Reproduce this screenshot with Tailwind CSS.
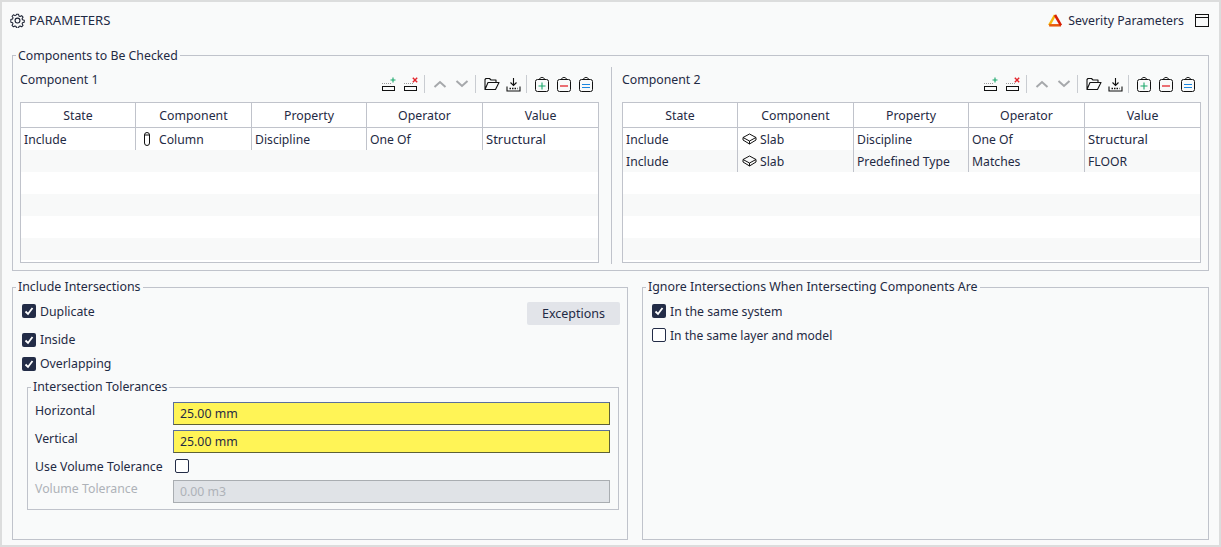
<!DOCTYPE html>
<html><head><meta charset="utf-8">
<script src="https://cdn.jsdelivr.net/npm/@tailwindcss/browser@4"></script>
</head>
<body class="m-0 bg-[#dcdddd]">
<div class="w-[1221px] h-[547px] overflow-hidden pt-[2px] px-[2px] pb-[2px] font-['Noto_Sans',sans-serif] text-[12.3px] leading-[16px] text-[#1f2a44]">
<main class="h-[543px] bg-[#f9fafa] px-[10px] flex flex-col">
  <header class="h-[45px] shrink-0 flex items-center justify-between pb-[9px] text-[#1f2a44]">
    <div class="flex items-center gap-[4px] ml-[-2px]">
      <svg class="w-[15px] h-[15px]" viewBox="0 0 16 16" fill="none" stroke="#1c2233" stroke-width="1.2" stroke-linejoin="round"><path d="M6.8 1h2.4l.4 2 1.3.6 1.8-1 1.6 1.7-1.1 1.8.5 1.3 2 .5v2.3l-2 .5-.5 1.3 1.1 1.7-1.6 1.7-1.8-1-1.3.5-.4 2H6.800l-.4-2-1.300-.5-1.800 1-1.600-1.700 1.100-1.700-.5-1.300-2-.5V6.900l2-.5.5-1.300-1.100-1.800 1.600-1.700 1.800 1 1.300-.6z" transform="translate(.6 .4) scale(.93)"/><circle cx="8" cy="8" r="2.600"/></svg>
      <span class="text-[13.150px]">PARAMETERS</span>
    </div>
    <div class="flex items-center">
      <svg class="w-[15px] h-[14px] mr-[5px]" viewBox="0 0 15 14" fill="none" stroke-width="2.500"><path d="M7 2 1.200 12.300" stroke="#f5b60f"/><path d="M1.200 12.300h11.800" stroke="#e8590c"/><path d="M13 12.300 7 2" stroke="#d81e05"/></svg>
      <span class="pt-[1px]">Severity Parameters</span>
      <svg class="w-[14px] h-[13px] ml-[11px]" viewBox="0 0 14 13" fill="none" stroke="#111"><rect x=".5" y=".5" width="13" height="12"/><path d="M.5 3.500h13"/></svg>
    </div>
  </header>

  <fieldset class="h-[224px] shrink-0 border border-[#c0c3cb] pl-[7px] pr-[8px] flex min-w-0">
    <legend class="ml-[-4px] px-[2px] h-[16px]"><span class="block pt-[1px]">Components to Be Checked</span></legend>
    <div class="flex w-full">
      <section class="w-[579px] shrink-0 flex flex-col">
        <div class="h-[39px] flex justify-between items-start pt-[9px]">
          <span>Component 1</span>
          <div class="flex items-center h-[22px] mt-[1px] pr-[6px] text-[#111]">
            <svg class="w-[16px] h-[16px]" viewBox="0 0 16 16" fill="none" stroke="#111"><rect x="1.500" y="10.500" width="12" height="4"/><path d="M1 7.500h9" stroke="#999" stroke-dasharray="1 1"/><path d="M12 1.500v5M9.500 4h5" stroke="#1aa86b" stroke-width="1.100"/></svg>
            <svg class="w-[16px] h-[16px] ml-[6px]" viewBox="0 0 16 16" fill="none" stroke="#111"><rect x="1.500" y="10.500" width="12" height="4"/><path d="M1 7.500h9" stroke="#999" stroke-dasharray="1 1"/><path d="m9.800 1.800 4.400 4.400m0-4.400L9.800 6.200" stroke="#e3242b" stroke-width="1.400"/></svg>
            <i class="w-px h-[18px] bg-[#c9ccd1] mx-[5px]"></i>
            <svg class="w-[14px] h-[14px] ml-[3px]" viewBox="0 0 14 14" fill="none" stroke="#a6a8ab" stroke-width="2"><path d="m1.500 10 5.500-5 5.500 5"/></svg>
            <svg class="w-[14px] h-[14px] ml-[8px]" viewBox="0 0 14 14" fill="none" stroke="#a6a8ab" stroke-width="2"><path d="m1.500 4 5.500 5 5.500-5"/></svg>
            <i class="w-px h-[18px] bg-[#c9ccd1] ml-[6px] mr-[8px]"></i>
            <svg class="w-[16px] h-[14px]" viewBox="0 0 16 14" fill="none" stroke="#111" stroke-width="1.100" stroke-linejoin="round"><path d="M1 12.500V2.500l1-1h3.500l1.500 1.500h5v2.500M1 12.500h10.500l3.500-7H4z"/></svg>
            <svg class="w-[15px] h-[15px] ml-[6px]" viewBox="0 0 15 15" fill="none" stroke="#111" stroke-width="1.100"><path d="M7.500 1v7.500M4.500 5.500l3 3 3-3M1 9.500v4.500h13V9.500"/><path d="M3.500 11.500h8" stroke-width="1.500" stroke-dasharray="1.500 1"/></svg>
            <i class="w-px h-[18px] bg-[#c9ccd1] ml-[5px] mr-[8px]"></i>
            <svg class="w-[14px] h-[16px]" viewBox="0 0 14 16" fill="none" stroke="#111"><path d="M4.500 3.500C4.500 .8 9.500 .8 9.500 3.500"/><rect x=".5" y="3.500" width="13" height="12" rx="2"/><path d="M7 6.500v7M3.500 10h7" stroke="#1aa86b" stroke-width="1.100"/></svg>
            <svg class="w-[14px] h-[16px] ml-[8px]" viewBox="0 0 14 16" fill="none" stroke="#111"><path d="M4.500 3.500C4.500 .8 9.500 .8 9.500 3.500"/><rect x=".5" y="3.500" width="13" height="12" rx="2"/><path d="M3 10h8" stroke="#e3242b" stroke-width="1.300"/></svg>
            <svg class="w-[14px] h-[16px] ml-[8px]" viewBox="0 0 14 16" fill="none" stroke="#111"><path d="M4.500 3.500C4.500 .8 9.500 .8 9.500 3.500"/><rect x=".5" y="3.500" width="13" height="12" rx="2"/><path d="M3 8.500h8M3 11.500h8" stroke="#1b87e0" stroke-width="1.200"/></svg>
          </div>
        </div>
        <div class="h-[161px] border border-[#c0c3cb] bg-[repeating-linear-gradient(to_bottom,#ffffff_0,#ffffff_22px,#f8f9f9_22px,#f8f9f9_44px)] bg-[position:0_25px] flex flex-col">
          <div class="grid grid-cols-[115px_116px_115px_116px_1fr] h-[25px] bg-white border-b border-[#c0c3cb] text-center items-center">
            <div class="h-full leading-[25px] border-r border-[#c0c3cb]">State</div><div class="h-full leading-[25px] border-r border-[#c0c3cb]">Component</div><div class="h-full leading-[25px] border-r border-[#c0c3cb]">Property</div><div class="h-full leading-[25px] border-r border-[#c0c3cb]">Operator</div><div class="h-full leading-[25px]">Value</div>
          </div>
          <div class="grid grid-cols-[115px_116px_115px_116px_1fr] grid-rows-[22px] h-[22px] leading-[24px] text-[12.2px]">
            <div class="border-r border-[#c0c3cb] pl-[3px]">Include</div>
            <div class="border-r border-[#c0c3cb] pl-[8px] flex items-center gap-[9px]"><svg class="w-[6px] h-[14px]" viewBox="0 0 6 14" fill="none" stroke="#111"><rect x=".5" y=".5" width="5" height="13" rx="2.500"/><path d="M.5 3h5"/></svg><span class="pt-[2px] leading-[20px]">Column</span></div>
            <div class="border-r border-[#c0c3cb] pl-[3px]">Discipline</div>
            <div class="border-r border-[#c0c3cb] pl-[3px]">One Of</div>
            <div class="pl-[3px] text-[13px] leading-[22px]">Structural</div>
          </div>
        </div>
      </section>
      <i class="w-px h-[197px] bg-[#c0c3cb] ml-[12px] mr-[10px] mt-[4px] shrink-0"></i>
      <section class="w-[579px] shrink-0 flex flex-col">
        <div class="h-[39px] flex justify-between items-start pt-[9px]">
          <span>Component 2</span>
          <div class="flex items-center h-[22px] mt-[1px] pr-[6px] text-[#111]">
            <svg class="w-[16px] h-[16px]" viewBox="0 0 16 16" fill="none" stroke="#111"><rect x="1.500" y="10.500" width="12" height="4"/><path d="M1 7.500h9" stroke="#999" stroke-dasharray="1 1"/><path d="M12 1.500v5M9.500 4h5" stroke="#1aa86b" stroke-width="1.100"/></svg>
            <svg class="w-[16px] h-[16px] ml-[6px]" viewBox="0 0 16 16" fill="none" stroke="#111"><rect x="1.500" y="10.500" width="12" height="4"/><path d="M1 7.500h9" stroke="#999" stroke-dasharray="1 1"/><path d="m9.800 1.800 4.400 4.400m0-4.400L9.800 6.200" stroke="#e3242b" stroke-width="1.400"/></svg>
            <i class="w-px h-[18px] bg-[#c9ccd1] mx-[5px]"></i>
            <svg class="w-[14px] h-[14px] ml-[3px]" viewBox="0 0 14 14" fill="none" stroke="#a6a8ab" stroke-width="2"><path d="m1.500 10 5.500-5 5.500 5"/></svg>
            <svg class="w-[14px] h-[14px] ml-[8px]" viewBox="0 0 14 14" fill="none" stroke="#a6a8ab" stroke-width="2"><path d="m1.500 4 5.500 5 5.500-5"/></svg>
            <i class="w-px h-[18px] bg-[#c9ccd1] ml-[6px] mr-[8px]"></i>
            <svg class="w-[16px] h-[14px]" viewBox="0 0 16 14" fill="none" stroke="#111" stroke-width="1.100" stroke-linejoin="round"><path d="M1 12.500V2.500l1-1h3.500l1.500 1.500h5v2.500M1 12.500h10.500l3.500-7H4z"/></svg>
            <svg class="w-[15px] h-[15px] ml-[6px]" viewBox="0 0 15 15" fill="none" stroke="#111" stroke-width="1.100"><path d="M7.500 1v7.500M4.500 5.500l3 3 3-3M1 9.500v4.500h13V9.500"/><path d="M3.500 11.500h8" stroke-width="1.500" stroke-dasharray="1.500 1"/></svg>
            <i class="w-px h-[18px] bg-[#c9ccd1] ml-[5px] mr-[8px]"></i>
            <svg class="w-[14px] h-[16px]" viewBox="0 0 14 16" fill="none" stroke="#111"><path d="M4.500 3.500C4.500 .8 9.500 .8 9.500 3.500"/><rect x=".5" y="3.500" width="13" height="12" rx="2"/><path d="M7 6.500v7M3.500 10h7" stroke="#1aa86b" stroke-width="1.100"/></svg>
            <svg class="w-[14px] h-[16px] ml-[8px]" viewBox="0 0 14 16" fill="none" stroke="#111"><path d="M4.500 3.500C4.500 .8 9.500 .8 9.500 3.500"/><rect x=".5" y="3.500" width="13" height="12" rx="2"/><path d="M3 10h8" stroke="#e3242b" stroke-width="1.300"/></svg>
            <svg class="w-[14px] h-[16px] ml-[8px]" viewBox="0 0 14 16" fill="none" stroke="#111"><path d="M4.500 3.500C4.500 .8 9.500 .8 9.500 3.500"/><rect x=".5" y="3.500" width="13" height="12" rx="2"/><path d="M3 8.500h8M3 11.500h8" stroke="#1b87e0" stroke-width="1.200"/></svg>
          </div>
        </div>
        <div class="h-[161px] border border-[#c0c3cb] bg-[repeating-linear-gradient(to_bottom,#ffffff_0,#ffffff_22px,#f8f9f9_22px,#f8f9f9_44px)] bg-[position:0_25px] flex flex-col">
          <div class="grid grid-cols-[115px_116px_115px_116px_1fr] h-[25px] bg-white border-b border-[#c0c3cb] text-center items-center">
            <div class="h-full leading-[25px] border-r border-[#c0c3cb]">State</div><div class="h-full leading-[25px] border-r border-[#c0c3cb]">Component</div><div class="h-full leading-[25px] border-r border-[#c0c3cb]">Property</div><div class="h-full leading-[25px] border-r border-[#c0c3cb]">Operator</div><div class="h-full leading-[25px]">Value</div>
          </div>
          <div class="grid grid-cols-[115px_116px_115px_116px_1fr] grid-rows-[22px] h-[22px] leading-[24px] text-[12.2px]">
            <div class="border-r border-[#c0c3cb] pl-[3px]">Include</div>
            <div class="border-r border-[#c0c3cb] pl-[4px] flex items-center gap-[3px]"><svg class="w-[15px] h-[12px]" viewBox="0 0 15 12" fill="none" stroke="#111"><path d="M7.500 1 14 4.500 7.500 8 1 4.500z"/><path d="M1 4.500V7l6.500 4L14 7V4.500M7.500 8v3"/></svg><span class="pt-[2px] leading-[20px]">Slab</span></div>
            <div class="border-r border-[#c0c3cb] pl-[3px]">Discipline</div>
            <div class="border-r border-[#c0c3cb] pl-[3px]">One Of</div>
            <div class="pl-[3px] text-[13px] leading-[22px]">Structural</div>
          </div>
          <div class="grid grid-cols-[115px_116px_115px_116px_1fr] grid-rows-[22px] h-[22px] leading-[24px] text-[12.2px]">
            <div class="border-r border-[#c0c3cb] pl-[3px]">Include</div>
            <div class="border-r border-[#c0c3cb] pl-[4px] flex items-center gap-[3px]"><svg class="w-[15px] h-[12px]" viewBox="0 0 15 12" fill="none" stroke="#111"><path d="M7.500 1 14 4.500 7.500 8 1 4.500z"/><path d="M1 4.500V7l6.500 4L14 7V4.500M7.500 8v3"/></svg><span class="pt-[2px] leading-[20px]">Slab</span></div>
            <div class="border-r border-[#c0c3cb] pl-[3px]">Predefined Type</div>
            <div class="border-r border-[#c0c3cb] pl-[3px]">Matches</div>
            <div class="pl-[3px]">FLOOR</div>
          </div>
        </div>
      </section>
    </div>
  </fieldset>

  <div class="flex gap-[14px] mt-[8px] h-[261px] shrink-0">
    <fieldset class="w-[616px] h-full border border-[#c0c3cb] pl-[9px] pr-[7px] min-w-0">
      <legend class="ml-[-6px] px-[2px] h-[16px] text-[12.4px]">Include Intersections</legend>
      <div class="flex items-start justify-between h-[40px]">
        <label class="flex items-center gap-[4px] h-[24px] mt-[4px]"><span class="w-[14px] h-[14px] rounded-[2px] bg-[#232c47] flex items-center justify-center"><svg class="w-[10px] h-[10px]" viewBox="0 0 10 10" fill="none" stroke="#fff" stroke-width="1.800"><path d="m1.500 5.500 2.500 2.500 4.500-6"/></svg></span><span class="pt-[1px]">Duplicate</span></label>
        <button class="w-[93px] h-[23px] rounded-[2px] bg-[#e2e4e9] text-[12.5px] text-[#1f2a44] leading-[23px] mt-[7px]">Exceptions</button>
      </div>
      <label class="flex items-center gap-[4px] h-[24px] mt-[-7px]"><span class="w-[14px] h-[14px] rounded-[2px] bg-[#232c47] flex items-center justify-center"><svg class="w-[10px] h-[10px]" viewBox="0 0 10 10" fill="none" stroke="#fff" stroke-width="1.800"><path d="m1.500 5.500 2.500 2.500 4.500-6"/></svg></span><span>Inside</span></label>
      <label class="flex items-center gap-[4px] h-[24px]"><span class="w-[14px] h-[14px] rounded-[2px] bg-[#232c47] flex items-center justify-center"><svg class="w-[10px] h-[10px]" viewBox="0 0 10 10" fill="none" stroke="#fff" stroke-width="1.800"><path d="m1.500 5.500 2.500 2.500 4.500-6"/></svg></span><span>Overlapping</span></label>
      <fieldset class="mt-[3px] ml-[5px] mr-[1px] h-[131px] border border-[#c0c3cb] pl-[7px] pr-[8px] min-w-0">
        <legend class="ml-[-4px] px-[2px] h-[16px]">Intersection Tolerances</legend>
        <div class="grid grid-cols-[138px_1fr] gap-y-[5px] items-start pt-[7px]">
          <span class="pt-[1px]">Horizontal</span>
          <div class="h-[23px] bg-[#fff456] border border-[#5f6136] border-t-[#5b6f9c] border-l-[#5b6f9c] pl-[6px] leading-[22px]">25.00 mm</div>
          <span class="pt-[1px]">Vertical</span>
          <div class="h-[23px] bg-[#fff456] border border-[#5f6136] border-t-[#5b6f9c] border-l-[#5b6f9c] pl-[6px] leading-[22px]">25.00 mm</div>
          <span class="leading-[18px] h-[22px]">Use Volume Tolerance</span>
          <div class="h-[22px] pt-[1px] pl-[2px]"><span class="block w-[14px] h-[14px] rounded-[2px] border border-[#232c47] bg-white"></span></div>
          <span class="text-[#aeb2b8] mt-[-5px] pt-[1px]">Volume Tolerance</span>
          <div class="h-[23px] mt-[-5px] bg-[#e0e3e7] border border-[#a9adb1] pl-[6px] leading-[22px] text-[#aeb2b8]">0.00 m3</div>
        </div>
      </fieldset>
    </fieldset>
    <fieldset class="w-[567px] h-full border border-[#c0c3cb] pl-[9px] pt-[4px] min-w-0">
      <legend class="ml-[-6px] px-[2px] h-[16px] text-[12.4px]">Ignore Intersections When Intersecting Components Are</legend>
      <label class="flex items-center gap-[4px] h-[24px]"><span class="w-[14px] h-[14px] rounded-[2px] bg-[#232c47] flex items-center justify-center"><svg class="w-[10px] h-[10px]" viewBox="0 0 10 10" fill="none" stroke="#fff" stroke-width="1.800"><path d="m1.500 5.500 2.500 2.500 4.500-6"/></svg></span><span class="pt-[1px]">In the same system</span></label>
      <label class="flex items-center gap-[4px] h-[24px]"><span class="w-[14px] h-[14px] rounded-[2px] border border-[#232c47] bg-white"></span><span class="pt-[1px] text-[12.1px]">In the same layer and model</span></label>
    </fieldset>
  </div>
</main>
</div>
</body></html>
